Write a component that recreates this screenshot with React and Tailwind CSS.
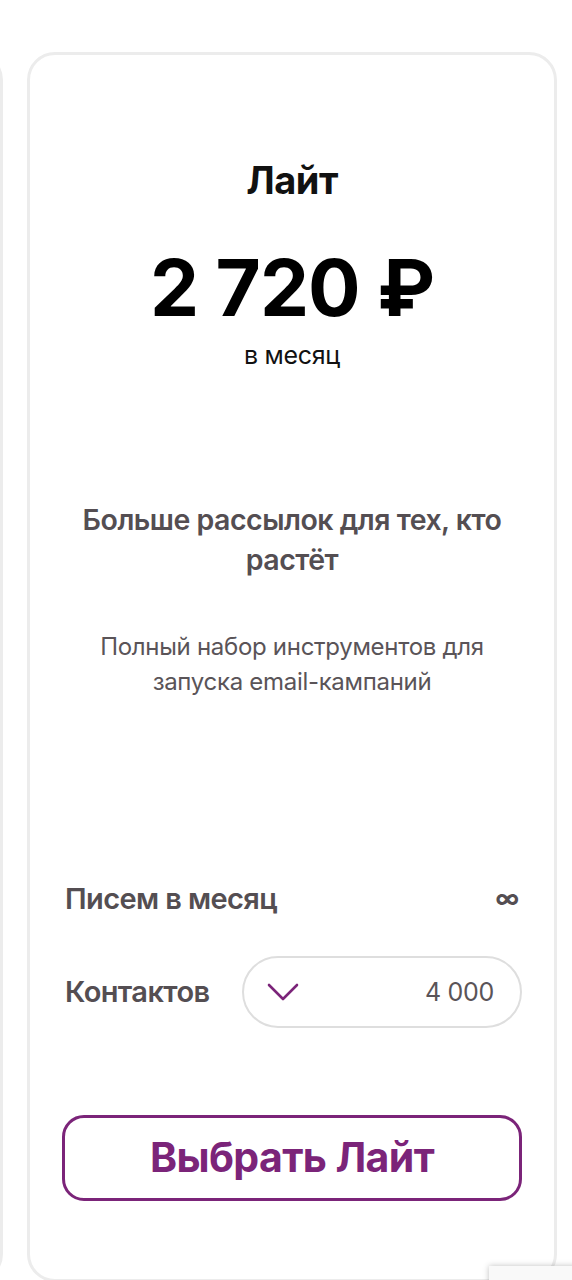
import React from "react";

export default function App() {
  return (
    <div className="relative w-[572px] h-[1280px] overflow-hidden bg-white" style={{ fontFamily: "Inter, 'Noto Sans', sans-serif" }}>
      <div className="flex gap-[24px] pt-[52px]">
        <div className="shrink-0 w-[530px] h-[1230px] ml-[-527px] rounded-[28px] border-[3px] border-[#ececec] bg-white" />
        <div className="shrink-0 w-[530px] h-[1230px] rounded-[28px] border-[3px] border-[#ececec] bg-white px-[32px] pt-[103px] flex flex-col">
          <div className="text-center text-[38px] leading-[44px] font-bold text-[#111] tracking-[-0.5px]">Лайт</div>
          <div className="mt-[45px] text-center text-[78px] leading-[82px] font-bold text-black tracking-[-1px]">2 720 ₽</div>
          <div className="mt-[11px] text-center text-[25px] leading-[30px] text-[#111] tracking-[-0.3px]">в месяц</div>
          <div className="mt-[130px] text-center text-[28.5px] leading-[40px] font-semibold text-[#544e52] tracking-[-0.5px]">Больше рассылок для тех, кто растёт</div>
          <div className="mt-[49px] text-center text-[24px] leading-[35px] text-[#5a5458] tracking-[-0.3px] px-[10px]">Полный набор инструментов для запуска email-кампаний</div>
          <div className="mt-[183px] flex items-center justify-between pl-[3px] pr-[3px]">
            <span className="text-[29px] leading-[34px] font-semibold text-[#544e52] tracking-[-0.6px]">Писем в месяц</span>
            <span className="text-[24px] leading-[32px] font-bold text-[#544e52]">∞</span>
          </div>
          <div className="mt-[40px] flex items-center justify-between pl-[3px]">
            <span className="text-[29px] leading-[34px] font-semibold text-[#544e52] tracking-[-0.6px]">Контактов</span>
            <div className="w-[280px] h-[72px] rounded-full border-[2px] border-[#dedede] flex items-center justify-between pl-[22px] pr-[26px]">
              <svg width="34" height="20" viewBox="0 0 34 20" fill="none">
                <path d="M3 3 L17 17 L31 3" stroke="#7b2479" strokeWidth="2.6" strokeLinecap="round" strokeLinejoin="round" />
              </svg>
              <span className="text-[25px] leading-[30px] text-[#5a5458] tracking-[-0.3px]">4 000</span>
            </div>
          </div>
          <button className="mt-[87px] h-[86px] w-full rounded-[22px] border-[3px] border-[#7b2479] bg-white text-[41px] font-bold text-[#7b2479] tracking-[-0.6px]">Выбрать Лайт</button>
        </div>
      </div>
      <div className="absolute left-[489px] top-[1266px] w-[256px] h-[60px] bg-[#f9f9f9] shadow-[0_0_6px_rgba(0,0,0,0.25)]" />
    </div>
  );
}
